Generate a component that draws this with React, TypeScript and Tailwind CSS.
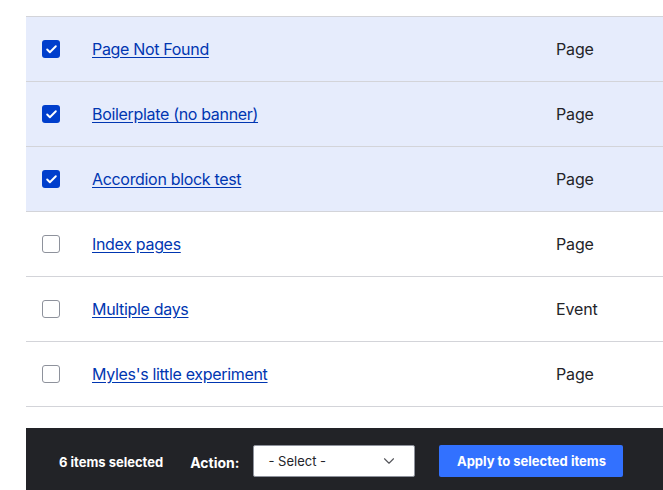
import { Check, ChevronDown } from 'lucide-react'

const rows = [
  { title: 'Page Not Found', type: 'Page', checked: true },
  { title: 'Boilerplate (no banner)', type: 'Page', checked: true },
  { title: 'Accordion block test', type: 'Page', checked: true },
  { title: 'Index pages', type: 'Page', checked: false },
  { title: 'Multiple days', type: 'Event', checked: false },
  { title: "Myles's little experiment", type: 'Page', checked: false },
]

function Checkbox({ checked }: { checked: boolean }) {
  if (checked) {
    return (
      <span className="flex h-[18px] w-[18px] items-center justify-center rounded-[3px] bg-[#003ecc]">
        <Check size={13} strokeWidth={3.5} className="text-white" />
      </span>
    )
  }
  return <span className="block h-[18px] w-[18px] rounded-[3px] border border-[#8e929c] bg-white" />
}

export default function App() {
  return (
    <div className="min-h-screen bg-white pt-4 pl-[26px] font-['Inter',sans-serif] text-[#232429]">
      <div className="border-t border-[#d3d4d9]">
        {rows.map((row) => (
          <div
            key={row.title}
            className={`flex h-[65px] items-center border-b border-[#d3d4d9] ${row.checked ? 'bg-[#e6ecfc]' : 'bg-white'}`}
          >
            <div className="w-[66px] pl-4">
              <Checkbox checked={row.checked} />
            </div>
            <a
              href="#"
              className="w-[464px] text-base tracking-[-0.02em] text-[#0036b1] underline underline-offset-2"
            >
              {row.title}
            </a>
            <span className="text-base tracking-[-0.01em]">{row.type}</span>
          </div>
        ))}
      </div>

      <div className="mt-[21px] flex h-[70px] items-start bg-[#222327] pt-[17px] text-white">
        <span className="ml-[33px] mt-[8px] text-[13px] font-bold">6 items selected</span>
        <span className="ml-[27px] mt-[8px] text-sm font-bold">Action:</span>
        <div className="ml-[14px] flex h-[32px] w-[162px] items-center justify-between rounded-[2px] border border-[#8e929c] bg-white pt-[2px] pl-[14px] pr-[16px] text-[13px] text-[#232429]">
          <span>- Select -</span>
          <ChevronDown size={18} strokeWidth={1.5} className="-mt-[2px] text-[#55565b]" />
        </div>
        <button className="ml-[24px] h-[32px] w-[184px] rounded-[2px] bg-[#3271ff] pt-[2px] text-[13px] font-bold text-white">
          Apply to selected items
        </button>
      </div>
    </div>
  )
}
